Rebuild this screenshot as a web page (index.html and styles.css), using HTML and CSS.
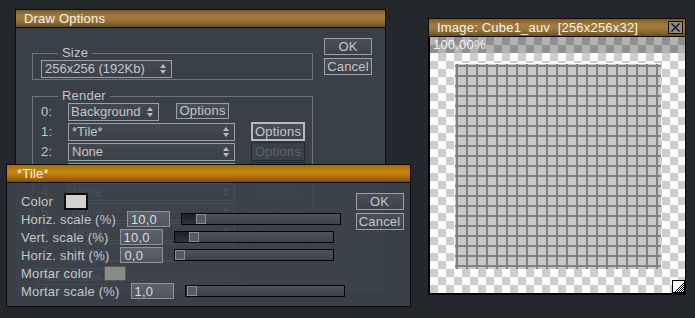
FILE: index.html
```html
<!DOCTYPE html>
<html>
<head>
<meta charset="utf-8">
<link rel="stylesheet" href="styles.css">
</head>
<body>
<div class="desk">

  <div class="win draw">
    <div class="title gold">Draw Options</div>
    <div class="body draw-body">
      <div class="draw-left">
        <fieldset class="group size-group">
          <legend>Size</legend>
          <div class="drop size-drop">256x256 (192Kb)<span class="spin"></span></div>
        </fieldset>
        <fieldset class="group render-group">
          <legend>Render</legend>
          <div class="row"><span class="num">0:</span><div class="drop bg-drop">Background<span class="spin"></span></div><div class="btn opt0">Options</div></div>
          <div class="row"><span class="num">1:</span><div class="drop wide">*Tile*<span class="spin"></span></div><div class="btn opt hi">Options</div></div>
          <div class="row"><span class="num">2:</span><div class="drop wide">None<span class="spin"></span></div><div class="btn opt dim">Options</div></div>
          <div class="row"><span class="num">3:</span><div class="drop wide">None<span class="spin"></span></div><div class="btn opt dim">Options</div></div>
          <div class="row"><span class="num">4:</span><div class="drop wide">None<span class="spin"></span></div><div class="btn opt dim">Options</div></div>
          <div class="row"><span class="num">5:</span><div class="drop wide">None<span class="spin"></span></div><div class="btn opt dim">Options</div></div>
          <div class="row"><span class="num">6:</span><div class="drop wide">None<span class="spin"></span></div><div class="btn opt dim">Options</div></div>
          <div class="row"><span class="num">7:</span><div class="drop wide">None<span class="spin"></span></div><div class="btn opt dim">Options</div></div>
        </fieldset>
        <div class="pass-row">
          <div class="btn pass">New Pass</div>
          <div class="btn pass dim">Delete Unused Pass</div>
        </div>
      </div>
      <div class="side">
        <div class="btn side-btn">OK</div>
        <div class="btn side-btn">Cancel</div>
      </div>
    </div>
  </div>

  <div class="win tile">
    <div class="title orange">*Tile*</div>
    <div class="body tile-body">
      <div class="tile-rows">
        <div class="trow"><span class="lbl">Color</span><span class="swatch light"></span></div>
        <div class="trow"><span class="lbl">Horiz. scale (%)</span><span class="num-in">10,0</span><span class="slider"><span class="fill" style="width:14px"></span><span class="thumb"></span></span></div>
        <div class="trow"><span class="lbl">Vert. scale (%)</span><span class="num-in">10,0</span><span class="slider"><span class="fill" style="width:14px"></span><span class="thumb"></span></span></div>
        <div class="trow"><span class="lbl">Horiz. shift (%)</span><span class="num-in">0,0</span><span class="slider"><span class="fill" style="width:0px"></span><span class="thumb"></span></span></div>
        <div class="trow"><span class="lbl">Mortar color</span><span class="swatch mid"></span></div>
        <div class="trow"><span class="lbl">Mortar scale (%)</span><span class="num-in">1,0</span><span class="slider"><span class="fill" style="width:1px"></span><span class="thumb"></span></span></div>
      </div>
      <div class="side tile-side">
        <div class="btn side-btn">OK</div>
        <div class="btn side-btn">Cancel</div>
      </div>
    </div>
  </div>

  <div class="win image">
    <div class="title gold img-title">
      <span>Image: Cube1_auv&nbsp; [256x256x32]</span>
      <svg class="close" width="15" height="13" viewBox="0 0 15 13"><rect x="0.5" y="0.5" width="14" height="12" fill="#8a8a8a" stroke="#111"/><path d="M3.5 2.5 L11.5 10.5 M11.5 2.5 L3.5 10.5" stroke="#111" stroke-width="1.4"/></svg>
    </div>
    <div class="canvas">
      <div class="zoombar">100,00%</div>
      <div class="grid"></div>
      <svg class="resize" width="13" height="13" viewBox="0 0 13 13">
        <defs><pattern id="dith" width="2" height="2" patternUnits="userSpaceOnUse"><rect width="2" height="2" fill="#fff"/><rect width="1" height="1" fill="#000"/><rect x="1" y="1" width="1" height="1" fill="#000"/></pattern></defs>
        <rect x="0" y="0" width="13" height="13" fill="#fff"/>
        <path d="M13 1 L13 13 L1 13 Z" fill="url(#dith)"/>
        <rect x="0.5" y="0.5" width="12" height="12" fill="none" stroke="#000"/>
      </svg>
    </div>
  </div>

</div>
</body>
</html>
```

FILE: styles.css
```css
* { box-sizing: border-box; }
html, body { margin: 0; padding: 0; }
body {
  width: 695px; height: 318px; overflow: hidden;
  background: #24272c;
  font-family: "Liberation Sans", Arial, sans-serif;
  font-size: 13px;
  letter-spacing: 0.2px;
  color: #c3c7cb;
}
.desk { position: relative; width: 695px; height: 318px; }

.win { position: absolute; }
.title {
  height: 19px; line-height: 18px;
  color: #f4f4f0; padding-left: 8px;
  border: 1px solid #0c0c0c;
}
.gold { background: linear-gradient(#7c5d2a, #a27b3c 35%, #9c773a 60%, #6c5024); }
.orange { background: linear-gradient(#a86a06, #c5850f 40%, #b57608 65%, #7f4f04); }

.body { background: #3a4047; border: 1px solid #111; border-top: 0; }

/* Draw options */
.draw { left: 15px; top: 9px; width: 371px; }
.draw-body { height: 267px; display: flex; padding: 10px 0 0 16px; }
.draw-left { width: 281px; padding-top: 9px; }
.group {
  margin: 0; border: 1px solid #6f757c;
  padding: 0 0 0 8px; min-width: 0;
}
.group legend { padding: 0 4px; margin-left: 17px; line-height: 12px; font-size: 13px; }
.size-group { height: 33px; padding-top: 1px; }
.render-group { margin-top: 10px; height: 172px; padding-top: 1px; }

.drop {
  position: relative; height: 18px; line-height: 16px;
  border: 1px solid #9aa0a6;
  background: linear-gradient(#434950, #3b4148);
  padding-left: 3px;
  letter-spacing: 0;
}
.spin {
  position: absolute; right: 4px; top: 3px;
  width: 7px; height: 10px;
}
.spin::before, .spin::after {
  content: ""; position: absolute; left: 0;
  border-left: 3.5px solid transparent; border-right: 3.5px solid transparent;
}
.spin::before { top: 0; border-bottom: 4px solid #b8bcc0; }
.spin::after { bottom: 0; border-top: 4px solid #b8bcc0; }
.size-drop { width: 131px; }
.row { display: flex; align-items: flex-start; height: 20px; }
.num { width: 27px; line-height: 18px; }
.bg-drop { width: 91px; padding-left: 2px; }
.wide { width: 167px; }
.btn {
  height: 16px; line-height: 14px; text-align: center;
  border: 1px solid #9aa0a6;
  background: linear-gradient(#4a5058, #3c4249);
}
.opt0 { width: 53px; margin-left: 17px; }
.opt { width: 54px; height: 19px; line-height: 17px; margin-left: 16px; margin-top: -1px; }
.opt.hi { border: 2px solid #b4babf; line-height: 15px; }
.dim { border-color: #262a2f; color: #5c636b; background: #3a4047; }
.pass-row { display: flex; gap: 6px; margin-top: 6px; padding-left: 5px; }
.pass { padding: 0 4px; height: 17px; line-height: 15px; }
.pass.dim { border-color: #555b62; }
.side { display: flex; flex-direction: column; gap: 3px; margin-left: 11px; }
.side-btn { width: 48px; height: 17px; line-height: 15px; }

/* Tile */
.tile { left: 6px; top: 164px; width: 405px; }
.tile .title { padding-left: 10px; }
.tile-body {
  height: 124px; display: flex; justify-content: space-between;
  background: rgba(60, 66, 74, 0.9);
  border-color: #0c0c0c;
  padding: 9px 9px 0 14px;
}
.tile-rows { display: flex; flex-direction: column; }
.trow { display: flex; align-items: center; height: 18px; gap: 11px; }
.trow .lbl { white-space: nowrap; }
.swatch { width: 24px; height: 17px; border: 2px solid #0c0c0c; }
.swatch.light { background: #d2d2d2; }
.swatch.mid { width: 22px; height: 15px; border: 1px solid #555; background: #8a8a8a; }
.num-in {
  width: 43px; height: 16px; line-height: 15px; padding-left: 3px;
  border: 1px solid #8e949a;
  background: linear-gradient(#5d636a, #50565d);
  color: #dcdcdc;
}
.slider {
  position: relative; display: flex; width: 160px; height: 12px;
  border: 1px solid #050505;
  background: linear-gradient(#4c525a, #3d4249);
}
.fill { height: 100%; background: linear-gradient(#1b2026, #2f353c); }
.thumb {
  width: 10px; height: 100%;
  border: 1px solid #8a9096; background: #555b62;
}
.tile-side { margin-top: 1px; gap: 3px; }

/* Image */
.image { left: 428px; top: 18px; width: 258px; }
.img-title { display: flex; justify-content: space-between; align-items: center; padding-right: 2px; }
.close { display: block; }
.canvas {
  position: relative; height: 258px;
  border: 1px solid #050505; border-top: 0;
  border-left-width: 2px; border-bottom-width: 2px;
  background-color: #fff;
  background-image: conic-gradient(#cdcdcd 25%, transparent 0 50%, #cdcdcd 0 75%, transparent 0);
  background-size: 16px 16px;
  display: flex; align-items: center; justify-content: center;
}
.zoombar {
  position: absolute; left: 0; right: 0; top: 0; height: 16px;
  background: rgba(0, 0, 0, 0.3);
  color: #f4f4f4; line-height: 15px; padding-left: 3px;
}
.grid {
  width: 207px; height: 206px; margin-top: 1px;
  border-top: 1px solid #fff; border-left: 1px solid #fff;
  background-color: #c9c9c9;
  background-image:
    linear-gradient(90deg, #808080 2px, transparent 2px),
    linear-gradient(#808080 2px, transparent 2px);
  background-size: 10px 10px;
  background-position: 1px 1px;
}
.resize { position: absolute; right: 0; bottom: 0; display: block; }
```
